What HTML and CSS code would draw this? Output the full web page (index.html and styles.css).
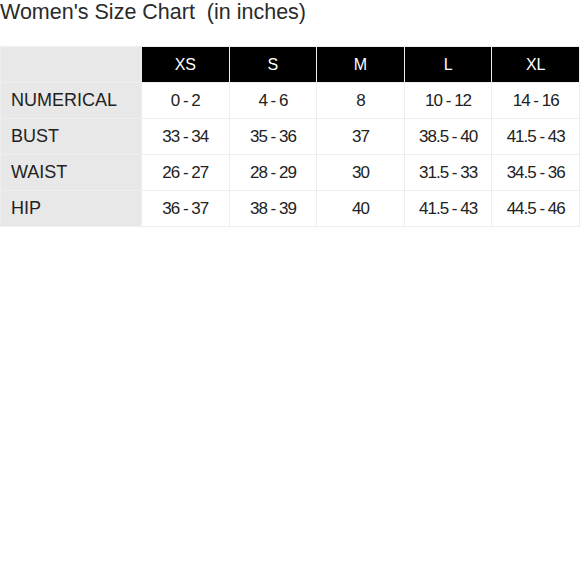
FILE: index.html
```html
<!DOCTYPE html>
<html>
<head>
<meta charset="utf-8">
<link rel="stylesheet" href="styles.css">
</head>
<body>
<h1 class="title">Women's Size Chart &nbsp;(in inches)</h1>
<table class="chart">
  <thead>
    <tr>
      <th class="corner"></th>
      <th class="size">XS</th>
      <th class="size">S</th>
      <th class="size">M</th>
      <th class="size">L</th>
      <th class="size">XL</th>
    </tr>
  </thead>
  <tbody>
    <tr>
      <th class="label">NUMERICAL</th>
      <td>0 - 2</td><td>4 - 6</td><td>8</td><td>10 - 12</td><td>14 - 16</td>
    </tr>
    <tr>
      <th class="label">BUST</th>
      <td>33 - 34</td><td>35 - 36</td><td>37</td><td>38.5 - 40</td><td>41.5 - 43</td>
    </tr>
    <tr>
      <th class="label">WAIST</th>
      <td>26 - 27</td><td>28 - 29</td><td>30</td><td>31.5 - 33</td><td>34.5 - 36</td>
    </tr>
    <tr>
      <th class="label">HIP</th>
      <td>36 - 37</td><td>38 - 39</td><td>40</td><td>41.5 - 43</td><td>44.5 - 46</td>
    </tr>
  </tbody>
</table>
</body>
</html>
```
FILE: styles.css
```css
html, body {
  margin: 0;
  padding: 0;
  background: #fff;
}
body {
  font-family: "Liberation Sans", Arial, sans-serif;
  color: #222;
}
.title {
  margin: 0;
  font-size: 21.5px;
  font-weight: normal;
  line-height: 24px;
  color: #2a2a2a;
}
.chart {
  margin-top: 22px;
  width: 580px;
  border-collapse: collapse;
  table-layout: fixed;
}
.chart th, .chart td {
  border: 1px solid #eeeeee;
  height: 36px;
  padding: 0;
  box-sizing: border-box;
  text-align: center;
  font-weight: normal;
}
.chart .corner {
  width: 141px;
  background: #e8e8e8;
}
.chart .size {
  background: #000;
  color: #fff;
  font-size: 16px;
}
.chart .label {
  background: #e8e8e8;
  text-align: left;
  padding-left: 10px;
  font-size: 18px;
  color: #222;
}
.chart td {
  font-size: 17px;
  letter-spacing: -1px;
  color: #222;
}
```
